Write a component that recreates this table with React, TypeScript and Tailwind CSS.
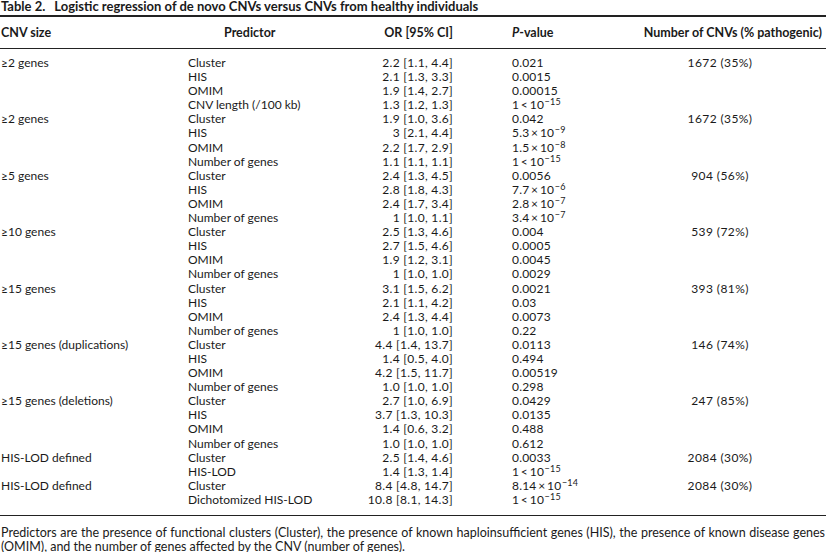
import React from 'react';

type Row = { predictor: string; or: string; p: React.ReactNode };
type Group = { size: string; count: string; rows: Row[] };

// base value with a raised exponent, as in the journal table
const Exp = ({ base, exp }: { base: string; exp: string }) => (
  <span>
    {base}
    <sup className="text-[9px] -top-[4px] ml-[0.5px]">{exp}</sup>
  </span>
);

const tiny = <Exp base={'1\u2009<\u200910'} exp="−15" />;
const x10 = (m: string, e: string) => <Exp base={`${m}\u2009×\u200910`} exp={e} />;

const groups: Group[] = [
  {
    size: '≥2 genes',
    count: '1672 (35%)',
    rows: [
      { predictor: 'Cluster', or: '2.2 [1.1, 4.4]', p: '0.021' },
      { predictor: 'HIS', or: '2.1 [1.3, 3.3]', p: '0.0015' },
      { predictor: 'OMIM', or: '1.9 [1.4, 2.7]', p: '0.00015' },
      { predictor: 'CNV length (/100 kb)', or: '1.3 [1.2, 1.3]', p: tiny },
    ],
  },
  {
    size: '≥2 genes',
    count: '1672 (35%)',
    rows: [
      { predictor: 'Cluster', or: '1.9 [1.0, 3.6]', p: '0.042' },
      { predictor: 'HIS', or: '3 [2.1, 4.4]', p: x10('5.3', '−9') },
      { predictor: 'OMIM', or: '2.2 [1.7, 2.9]', p: x10('1.5', '−8') },
      { predictor: 'Number of genes', or: '1.1 [1.1, 1.1]', p: tiny },
    ],
  },
  {
    size: '≥5 genes',
    count: '904 (56%)',
    rows: [
      { predictor: 'Cluster', or: '2.4 [1.3, 4.5]', p: '0.0056' },
      { predictor: 'HIS', or: '2.8 [1.8, 4.3]', p: x10('7.7', '−6') },
      { predictor: 'OMIM', or: '2.4 [1.7, 3.4]', p: x10('2.8', '−7') },
      { predictor: 'Number of genes', or: '1 [1.0, 1.1]', p: x10('3.4', '−7') },
    ],
  },
  {
    size: '≥10 genes',
    count: '539 (72%)',
    rows: [
      { predictor: 'Cluster', or: '2.5 [1.3, 4.6]', p: '0.004' },
      { predictor: 'HIS', or: '2.7 [1.5, 4.6]', p: '0.0005' },
      { predictor: 'OMIM', or: '1.9 [1.2, 3.1]', p: '0.0045' },
      { predictor: 'Number of genes', or: '1 [1.0, 1.0]', p: '0.0029' },
    ],
  },
  {
    size: '≥15 genes',
    count: '393 (81%)',
    rows: [
      { predictor: 'Cluster', or: '3.1 [1.5, 6.2]', p: '0.0021' },
      { predictor: 'HIS', or: '2.1 [1.1, 4.2]', p: '0.03' },
      { predictor: 'OMIM', or: '2.4 [1.3, 4.4]', p: '0.0073' },
      { predictor: 'Number of genes', or: '1 [1.0, 1.0]', p: '0.22' },
    ],
  },
  {
    size: '≥15 genes (duplications)',
    count: '146 (74%)',
    rows: [
      { predictor: 'Cluster', or: '4.4 [1.4, 13.7]', p: '0.0113' },
      { predictor: 'HIS', or: '1.4 [0.5, 4.0]', p: '0.494' },
      { predictor: 'OMIM', or: '4.2 [1.5, 11.7]', p: '0.00519' },
      { predictor: 'Number of genes', or: '1.0 [1.0, 1.0]', p: '0.298' },
    ],
  },
  {
    size: '≥15 genes (deletions)',
    count: '247 (85%)',
    rows: [
      { predictor: 'Cluster', or: '2.7 [1.0, 6.9]', p: '0.0429' },
      { predictor: 'HIS', or: '3.7 [1.3, 10.3]', p: '0.0135' },
      { predictor: 'OMIM', or: '1.4 [0.6, 3.2]', p: '0.488' },
      { predictor: 'Number of genes', or: '1.0 [1.0, 1.0]', p: '0.612' },
    ],
  },
  {
    size: 'HIS-LOD defined',
    count: '2084 (30%)',
    rows: [
      { predictor: 'Cluster', or: '2.5 [1.4, 4.6]', p: '0.0033' },
      { predictor: 'HIS-LOD', or: '1.4 [1.3, 1.4]', p: tiny },
    ],
  },
  {
    size: 'HIS-LOD defined',
    count: '2084 (30%)',
    rows: [
      { predictor: 'Cluster', or: '8.4 [4.8, 14.7]', p: x10('8.14', '−14') },
      { predictor: 'Dichotomized HIS-LOD', or: '10.8 [8.1, 14.3]', p: tiny },
    ],
  },
];

const cols = 'grid grid-cols-[188px_172px_93px_59px_120px_1fr]';

export default function App() {
  return (
    <div className="w-[826px] h-[552px] overflow-hidden bg-white text-[#1a1a1a] text-[12px] font-['Lato','Liberation_Sans',sans-serif]">
      {/* Title */}
      <div className="pl-[1px] leading-[12px] font-bold text-[13px]">
        <span>Table 2.</span>
        <span className="ml-[9px]">Logistic regression of de novo CNVs versus CNVs from healthy individuals</span>
      </div>

      <div className="mt-[3px] border-t-2 border-[#222]" />

      {/* Header */}
      <div className={`${cols} pt-[9px] pb-[8px] leading-[14px] font-bold text-[12.5px]`}>
        <div className="pl-[1px]">CNV size</div>
        <div className="pl-[36px]">Predictor</div>
        <div className="text-right">OR [95% CI]</div>
        <div />
        <div>
          <span className="italic">P</span>-value
        </div>
        <div className="text-right pr-[4px]">Number of CNVs (% pathogenic)</div>
      </div>

      <div className="border-t border-[#222]" />

      {/* Body */}
      <div className="pt-[7px] pb-[8px]">
        {groups.map((g, gi) =>
          g.rows.map((r, ri) => (
            <div key={`${gi}-${ri}`} className={`${cols} leading-[14.1px] h-[14.1px]`}>
              <div className="pl-[1px]">{ri === 0 ? g.size : ''}</div>
              <div>{r.predictor}</div>
              <div className="text-right tracking-[0.3px]">{r.or}</div>
              <div />
              <div className="tracking-[0.2px]">{r.p}</div>
              <div className="text-center pr-[18px] tracking-[0.4px]">{ri === 0 ? g.count : ''}</div>
            </div>
          ))
        )}
      </div>

      <div className="border-t-[1.5px] border-[#222]" />

      {/* Footnote */}
      <p className="pt-[10px] px-[1px] text-[12.5px] leading-[14px] text-justify">
        Predictors are the presence of functional clusters (Cluster), the presence of known haploinsufficient genes
        (HIS), the presence of known disease genes (OMIM), and the number of genes affected by the CNV (number of
        genes).
      </p>
    </div>
  );
}
